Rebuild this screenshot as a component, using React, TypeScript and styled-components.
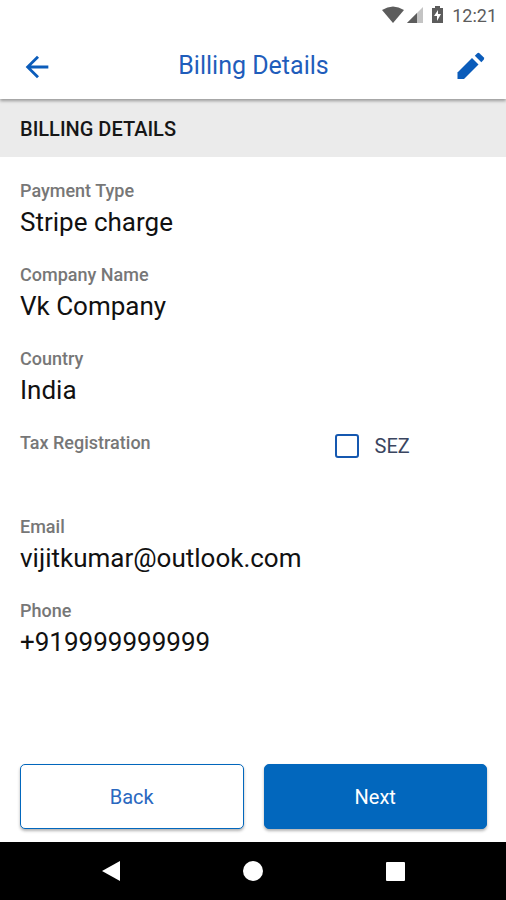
import React from 'react';
import styled, { createGlobalStyle } from 'styled-components';

const Global = createGlobalStyle`
  * { box-sizing: border-box; }
  body { margin: 0; background: #fff; font-family: Roboto, "Liberation Sans", sans-serif; }
  button { font-family: inherit; }
`;

const Screen = styled.div`
  min-height: 100vh;
  display: flex;
  flex-direction: column;
`;

const StatusBar = styled.div`
  height: 32px;
  display: flex;
  align-items: center;
  justify-content: flex-end;
  gap: 8px;
  padding: 0 9px 2px;
  color: #5c5c5c;
  font-size: 18px;
`;

const AppBar = styled.header`
  height: 67px;
  display: grid;
  grid-template-columns: 32px 1fr 32px;
  align-items: center;
  padding: 0 19px 0 20px;
  box-shadow: 0 2px 3px rgba(0, 0, 0, 0.35);
  clip-path: inset(0 0 -6px 0);
  position: relative;
`;

const Title = styled.h1`
  margin: 0;
  text-align: center;
  color: #1f5dbb;
  font-size: 25px;
  font-weight: 400;
`;

const IconButton = styled.button`
  width: 32px;
  height: 32px;
  padding: 0;
  border: 0;
  background: none;
  color: #0b5cba;
  display: grid;
  place-items: center;
`;

const SectionTitle = styled.h2`
  margin: 0;
  height: 58px;
  padding: 2px 20px 0;
  display: flex;
  align-items: center;
  background: #ebebeb;
  color: #161616;
  font-size: 20px;
  font-weight: 500;
`;

const Details = styled.dl`
  flex: 1;
  margin: 0;
  padding: 23px 20px 0;
`;

const Field = styled.div`
  min-height: 84px;
`;

const Label = styled.dt`
  color: #777;
  font-size: 18px;
  line-height: 22px;
  font-weight: 500;
`;

const Value = styled.dd`
  margin: 3px 0 0;
  color: #111;
  font-size: 26px;
  line-height: 34px;
`;

const SplitField = styled(Field)`
  display: grid;
  grid-template-columns: 27fr 13fr;
  align-items: start;
`;

const CheckCell = styled.dd`
  margin: 0;
`;

const CheckLabel = styled.label`
  display: flex;
  align-items: center;
  gap: 16px;
  color: #3a4560;
  font-size: 20px;
  line-height: 28px;
`;

const Checkbox = styled.input`
  appearance: none;
  width: 24px;
  height: 24px;
  margin: 0;
  border: 2px solid #1558b0;
  border-radius: 3px;
  &:checked { background: #1558b0; }
`;

const Actions = styled.div`
  display: grid;
  grid-template-columns: 1fr 1fr;
  gap: 20px;
  padding: 0 19px 13px 20px;
`;

const ActionButton = styled.button<{ $primary?: boolean }>`
  height: 65px;
  border: 1px solid #0267bd;
  border-radius: 5px;
  background: ${(p) => (p.$primary ? '#0267bd' : '#fff')};
  color: ${(p) => (p.$primary ? '#fff' : '#2a68c0')};
  font-size: 20px;
  box-shadow: 0 2px 3px rgba(0, 0, 0, 0.3);
`;

const SystemNav = styled.nav`
  height: 58px;
  background: #000;
  display: flex;
  justify-content: center;
  gap: 110px;
`;

const NavButton = styled.button`
  width: 32px;
  padding: 0;
  border: 0;
  background: none;
  display: grid;
  place-items: center;
`;

const fields = [
  ['Payment Type', 'Stripe charge'],
  ['Company Name', 'Vk Company'],
  ['Country', 'India'],
];

const contacts = [
  ['Email', 'vijitkumar@outlook.com'],
  ['Phone', '+919999999999'],
];

const renderField = ([label, value]: string[]) => (
  <Field key={label}>
    <Label>{label}</Label>
    <Value>{value}</Value>
  </Field>
);

export default function App() {
  return (
    <Screen>
      <Global />
      <StatusBar>
        <svg width="62" height="18" viewBox="0 0 62 18" aria-hidden="true">
          <path d="M0 4Q11 -3 22 4L11 17Z" fill="#5c5c5c" />
          <path d="M41 1V17H25Z" fill="#c4c4c4" />
          <path d="M35 7V17H25Z" fill="#5c5c5c" />
          <path d="M50 2h3V0h5v2h3v15H50Z" fill="#5c5c5c" />
          <path d="M56 4l-4 6h3v5l4-7h-3Z" fill="#fff" />
        </svg>
        <time>12:21</time>
      </StatusBar>
      <AppBar>
        <IconButton aria-label="Go back">
          <svg width="34" height="34" viewBox="0 0 24 24" fill="currentColor">
            <path d="M20 11H7.83l5.59-5.59L12 4l-8 8 8 8 1.41-1.41L7.83 13H20v-2z" />
          </svg>
        </IconButton>
        <Title>Billing Details</Title>
        <IconButton aria-label="Edit">
          <svg width="28" height="28" viewBox="0 0 28 28" fill="currentColor">
            <path d="M0.500 27V20.500L15 6L21.500 12.500L7 27Z" />
            <path d="M17.800 3.800L20.300 1.300Q21.500 0.300 22.700 1.400L26.600 5.300Q27.700 6.500 26.700 7.700L24.300 10.200Z" />
          </svg>
        </IconButton>
      </AppBar>
      <SectionTitle>BILLING DETAILS</SectionTitle>
      <Details>
        {fields.map(renderField)}
        <SplitField>
          <Label>Tax Registration</Label>
          <CheckCell>
            <CheckLabel>
              <Checkbox type="checkbox" />
              SEZ
            </CheckLabel>
          </CheckCell>
        </SplitField>
        {contacts.map(renderField)}
      </Details>
      <Actions>
        <ActionButton>Back</ActionButton>
        <ActionButton $primary>Next</ActionButton>
      </Actions>
      <SystemNav aria-label="System">
        <NavButton aria-label="System back">
          <svg width="20" height="22" viewBox="0 0 20 22"><path d="M1 11L19 1V21Z" fill="#fff" /></svg>
        </NavButton>
        <NavButton aria-label="Home">
          <svg width="22" height="22" viewBox="0 0 22 22"><circle cx="11" cy="11" r="10" fill="#fff" /></svg>
        </NavButton>
        <NavButton aria-label="Recent apps">
          <svg width="20" height="20" viewBox="0 0 20 20"><rect x="1" y="1" width="19" height="19" rx="1" fill="#fff" /></svg>
        </NavButton>
      </SystemNav>
    </Screen>
  );
}
